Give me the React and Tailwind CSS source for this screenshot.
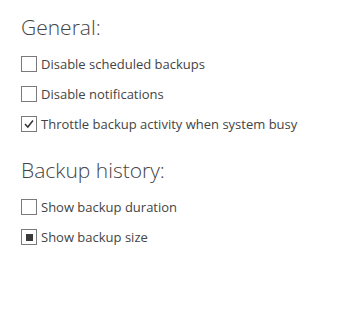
import React from "react";

function Box({ state }) {
  return (
    <span className="w-[16px] h-[16px] border border-[#7a7a7a] bg-white flex items-center justify-center shrink-0">
      {state === "checked" && (
        <svg width="12" height="12" viewBox="0 0 12 12">
          <path d="M2 6 L4.8 9 L10 2.5" fill="none" stroke="#333" strokeWidth="1.5" />
        </svg>
      )}
      {state === "mixed" && <span className="w-[7px] h-[7px] bg-[#3a3a3a]" />}
    </span>
  );
}

function Row({ label, state }) {
  return (
    <div className="flex items-center gap-[4px] h-[16px]">
      <Box state={state} />
      <span className="text-[13px] text-[#444] leading-none">{label}</span>
    </div>
  );
}

export default function App() {
  return (
    <div className="w-[347px] h-[335px] bg-white pl-[21px] pt-[14px]" style={{ fontFamily: '"Open Sans", "Noto Sans", sans-serif' }}>
      <h2 className="text-[21px] font-light text-[#444] leading-[26px]">General:</h2>
      <div className="flex flex-col gap-[14px] mt-[16px]">
        <Row label="Disable scheduled backups" />
        <Row label="Disable notifications" />
        <Row label="Throttle backup activity when system busy" state="checked" />
      </div>
      <h2 className="text-[21px] font-light text-[#444] leading-[26px] mt-[25px]">Backup history:</h2>
      <div className="flex flex-col gap-[14px] mt-[16px]">
        <Row label="Show backup duration" />
        <Row label="Show backup size" state="mixed" />
      </div>
    </div>
  );
}
